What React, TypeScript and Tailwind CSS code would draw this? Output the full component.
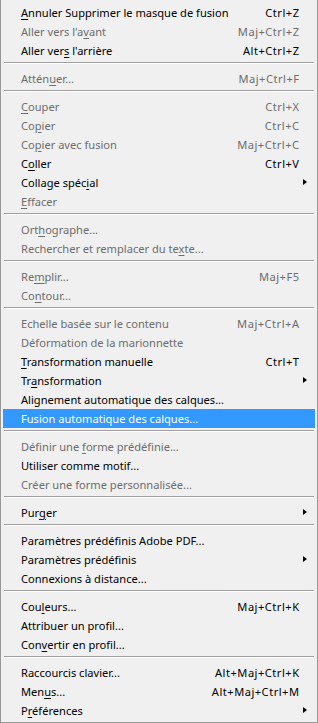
type Item =
  | { sep: true }
  | {
      sep?: false;
      label: string;
      u?: number;
      key?: string;
      off?: boolean;
      sub?: boolean;
      hot?: boolean;
    };

const items: Item[] = [
  { label: "Annuler Supprimer le masque de fusion", u: 0, key: "Ctrl+Z" },
  { label: "Aller vers l'avant", u: 14, key: "Maj+Ctrl+Z", off: true },
  { label: "Aller vers l'arrière", u: 9, key: "Alt+Ctrl+Z" },
  { sep: true },
  { label: "Atténuer...", u: 5, key: "Maj+Ctrl+F", off: true },
  { sep: true },
  { label: "Couper", u: 0, key: "Ctrl+X", off: true },
  { label: "Copier", u: 2, key: "Ctrl+C", off: true },
  { label: "Copier avec fusion", u: 2, key: "Maj+Ctrl+C", off: true },
  { label: "Coller", u: 1, key: "Ctrl+V" },
  { label: "Collage spécial", u: 12, sub: true },
  { label: "Effacer", u: 0, off: true },
  { sep: true },
  { label: "Orthographe...", u: 3, off: true },
  { label: "Rechercher et remplacer du texte...", u: 29, off: true },
  { sep: true },
  { label: "Remplir...", u: 2, key: "Maj+F5", off: true },
  { label: "Contour...", u: 2, off: true },
  { sep: true },
  { label: "Echelle basée sur le contenu", key: "Maj+Ctrl+A", off: true },
  { label: "Déformation de la marionnette", off: true },
  { label: "Transformation manuelle", u: 0, key: "Ctrl+T" },
  { label: "Transformation", u: 2, sub: true },
  { label: "Alignement automatique des calques..." },
  { label: "Fusion automatique des calques...", hot: true },
  { sep: true },
  { label: "Définir une forme prédéfinie...", u: 12, off: true },
  { label: "Utiliser comme motif..." },
  { label: "Créer une forme personnalisée...", off: true },
  { sep: true },
  { label: "Purger", u: 3, sub: true },
  { sep: true },
  { label: "Paramètres prédéfinis Adobe PDF..." },
  { label: "Paramètres prédéfinis", sub: true },
  { label: "Connexions à distance..." },
  { sep: true },
  { label: "Couleurs...", u: 3, key: "Maj+Ctrl+K" },
  { label: "Attribuer un profil..." },
  { label: "Convertir en profil...", u: 3 },
  { sep: true },
  { label: "Raccourcis clavier...", key: "Alt+Maj+Ctrl+K" },
  { label: "Menus...", u: 3, key: "Alt+Maj+Ctrl+M" },
  { label: "Préférences", u: 1, sub: true },
];

function Label({ text, u }: { text: string; u?: number }) {
  if (u === undefined) return <span>{text}</span>;
  return (
    <span>
      {text.slice(0, u)}
      <span className="underline underline-offset-2">{text[u]}</span>
      {text.slice(u + 1)}
    </span>
  );
}

export default function App() {
  return (
    <div
      className="w-[318px] h-[723px] bg-[#f0f0f0] border-x border-b border-[#979797] pt-[3px] text-[11.1px] text-black overflow-hidden"
      style={{ fontFamily: '"Noto Sans", "Segoe UI", sans-serif' }}
    >
      {items.map((it, i) =>
        it.sep ? (
          <div key={i} className="h-[9px] mx-[3px] pt-[2px]">
            <div className="h-px bg-[#a0a0a0]" />
            <div className="h-px bg-white" />
          </div>
        ) : (
          <div
            key={i}
            className={`relative mx-[2px] h-[19px] leading-[19px] pl-[18px] pr-[16px] flex justify-between whitespace-nowrap ${
              it.hot ? "bg-[#3399ff] text-white" : it.off ? "text-[#6d6d6d]" : "text-black"
            }`}
          >
            <Label text={it.label} u={it.u} />
            {it.key && <span className="tracking-[0.5px] -mr-[0.5px]">{it.key}</span>}
            {it.sub && (
              <span className="absolute right-[8px] top-[6px] w-0 h-0 border-y-[3.5px] border-y-transparent border-l-[4px] border-l-black" />
            )}
          </div>
        )
      )}
    </div>
  );
}
